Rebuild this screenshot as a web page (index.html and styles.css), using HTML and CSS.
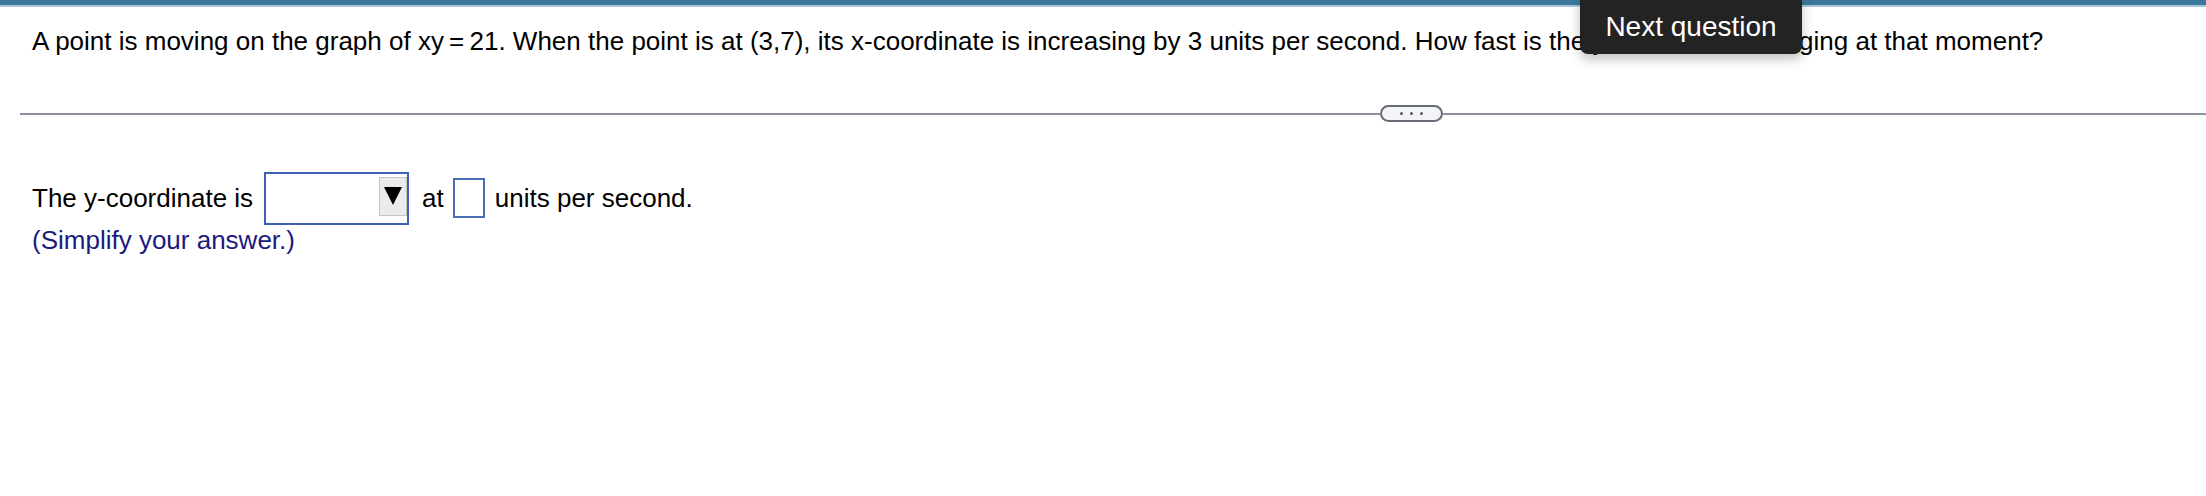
FILE: index.html
```html
<!DOCTYPE html>
<html>
<head>
<meta charset="utf-8">
<link rel="stylesheet" href="styles.css">
</head>
<body>
<div class="topbar"></div>
<div class="question">A point is moving on the graph of xy&#8201;=&#8201;21. When the point is at (3,7), its x-coordinate is increasing by 3 units per second. How fast is the y-coordinate changing at that moment?</div>
<div class="divider">
  <div class="line line-left"></div>
  <div class="pill"><span class="dot"></span><span class="dot"></span><span class="dot"></span></div>
  <div class="line line-right"></div>
</div>
<div class="answer">
  <div class="row">
    <span>The y-coordinate is</span>
    <div class="select"><div class="select-btn"><span class="tri"></span></div></div>
    <span>at</span>
    <div class="input"></div>
    <span>units per second.</span>
  </div>
  <div class="hint">(Simplify your answer.)</div>
</div>
<div class="tooltip">Next question</div>
</body>
</html>
```
FILE: styles.css
```css
html, body {
  margin: 0;
  padding: 0;
  background: #ffffff;
}
body {
  font-family: "Liberation Sans", Arial, sans-serif;
  font-size: 26px;
  color: #000;
  position: relative;
  width: 2206px;
  height: 496px;
  overflow: hidden;
}
.topbar {
  height: 5px;
  background: #3b789c;
  border-bottom: 2px solid #a9c7da;
}
.question {
  padding: 19px 0 0 32px;
  line-height: 30px;
  white-space: nowrap;
}
.divider {
  display: flex;
  align-items: center;
  margin-top: 49px;
  padding-left: 20px;
}
.line {
  height: 2px;
  background: #8e909e;
}
.line-left {
  width: 1360px;
}
.line-right {
  flex: 1;
}
.pill {
  width: 59px;
  height: 13px;
  border: 2px solid #676b76;
  border-radius: 10px;
  background: #f3f4f7;
  display: flex;
  align-items: center;
  justify-content: center;
  gap: 7px;
}
.dot {
  width: 3px;
  height: 3px;
  border-radius: 50%;
  background: #555860;
}
.answer {
  padding: 51px 0 0 32px;
}
.row {
  display: flex;
  align-items: center;
  height: 50px;
}
.select {
  width: 141px;
  height: 46px;
  border: 2px solid #3f5fb8;
  margin: 0 13px 0 11px;
  display: flex;
  justify-content: flex-end;
  align-items: flex-start;
  padding-top: 3px;
  box-sizing: content-box;
}
.select-btn {
  width: 26px;
  height: 37px;
  background: #ebebeb;
  border: 1px solid #c4c4c4;
  display: flex;
  align-items: center;
  justify-content: center;
}
.tri {
  width: 0;
  height: 0;
  border-left: 9px solid transparent;
  border-right: 9px solid transparent;
  border-top: 18px solid #000;
}
.input {
  width: 28px;
  height: 36px;
  border: 2px solid #4a6db3;
  margin: 0 10px 0 9px;
}
.hint {
  color: #1b1a7d;
  margin-top: 2px;
  line-height: 30px;
}
.tooltip {
  position: absolute;
  left: 1580px;
  top: -8px;
  width: 222px;
  height: 62px;
  padding-top: 8px;
  box-sizing: border-box;
  background: #232323;
  color: #fff;
  font-size: 28px;
  border-radius: 8px;
  display: flex;
  align-items: center;
  justify-content: center;
  box-shadow: 0 5px 12px rgba(0,0,0,0.25);
}
```
